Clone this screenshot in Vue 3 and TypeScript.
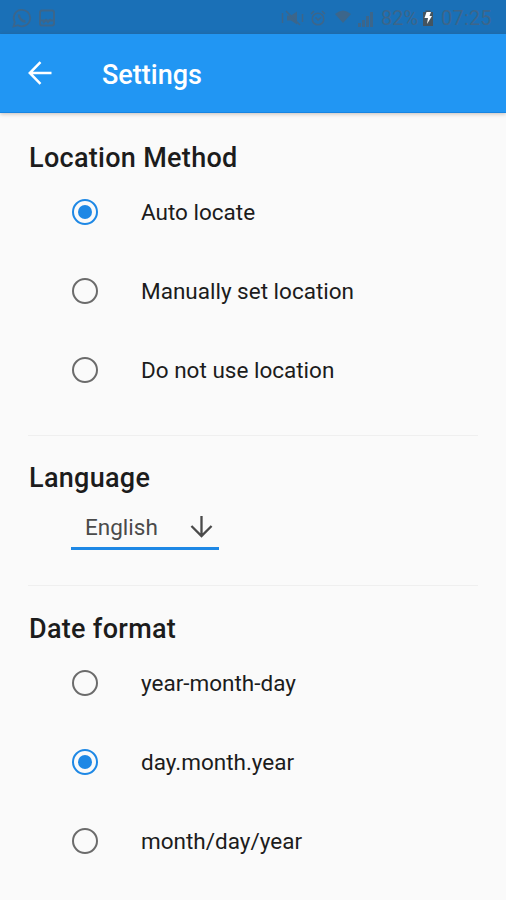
<script setup lang="ts">
import { ref } from 'vue'

interface Option {
  id: string
  label: string
}

const locationOptions: Option[] = [
  { id: 'auto', label: 'Auto locate' },
  { id: 'manual', label: 'Manually set location' },
  { id: 'none', label: 'Do not use location' },
]
const dateOptions: Option[] = [
  { id: 'ymd', label: 'year-month-day' },
  { id: 'dmy', label: 'day.month.year' },
  { id: 'mdy', label: 'month/day/year' },
]

const locationMethod = ref('auto')
const dateFormat = ref('dmy')
const language = ref('English')
</script>

<template>
  <div class="screen">
    <div class="status">
      <div class="status-left">
        <svg class="s-chat" viewBox="0 0 20 20" fill="none" stroke="currentColor" stroke-width="1.8">
          <path d="M1.5 18.5 2.8 14A8.2 8.2 0 1 1 6 17.2Z" />
          <path d="M7 6.5C6.5 10 10 13.5 13.5 13.5" stroke-width="2.4" />
        </svg>
        <svg class="s-img" viewBox="0 0 18 18" fill="none" stroke="currentColor" stroke-width="2">
          <rect x="2" y="1.5" width="14" height="15" rx="2" />
          <path d="M2 11.5h14M5 14l3-3 2 2 3-3" />
        </svg>
      </div>
      <div class="status-right">
        <svg class="s-mute" viewBox="0 0 24 16" fill="none" stroke="currentColor" stroke-width="1.5">
          <path d="M6 5.5h4l6-4v13l-6-4H6Z" fill="currentColor" stroke="none" />
          <path d="M5 1l14 14M1.5 3v10M21.5 4v8" />
        </svg>
        <svg class="s-alarm" viewBox="0 0 16 16" fill="none" stroke="currentColor" stroke-width="1.6">
          <circle cx="8" cy="9" r="5.8" />
          <path d="M1 4l3-3M15 4l-3-3M5.500 7.500 8 10l3-2.500" />
        </svg>
        <svg class="s-wifi" viewBox="0 0 16 14" fill="currentColor">
          <path d="M0 4Q8-3 16 4L8 13Z" />
        </svg>
        <svg class="s-signal" viewBox="0 0 15 16" fill="currentColor">
          <path d="M0 12h3v4H0ZM4 9h3v7H4ZM8 5h3v11H8ZM12 1h3v15h-3Z" />
        </svg>
        <span class="pct">82%</span>
        <svg class="s-bat" viewBox="0 0 12 18">
          <path d="M3.500 1.500h5V3H11v14H1V3h2.500Z" fill="#44545f" />
          <path d="M4.500 3h4.500L7.500 7H10L5 15l1-6H2.500Z" fill="#fff" />
        </svg>
        <span class="time">07:25</span>
      </div>
    </div>

    <header class="appbar">
      <svg class="back" viewBox="0 0 24 24" fill="none" stroke="currentColor" stroke-width="2.500">
        <path d="M23.500 12H2M12.500 1.200 1.800 12l10.700 10.800" />
      </svg>
      <h1>Settings</h1>
    </header>

    <main>
      <section class="location">
        <h2 class="w-location">Location Method</h2>
        <label v-for="o in locationOptions" :key="o.id" class="row" @click="locationMethod = o.id">
          <span class="radio" :class="{ on: locationMethod === o.id }"></span>
          <span class="label">{{ o.label }}</span>
        </label>
      </section>

      <section class="language">
        <h2>Language</h2>
        <div class="select">
          <span>{{ language }}</span>
          <svg viewBox="0 0 24 24" fill="none" stroke="currentColor" stroke-width="2.400">
            <path d="M12 1v20.500M1.500 11.500 12 22l10.500-10.500" />
          </svg>
        </div>
      </section>

      <section class="date">
        <h2>Date format</h2>
        <label v-for="o in dateOptions" :key="o.id" class="row" @click="dateFormat = o.id">
          <span class="radio" :class="{ on: dateFormat === o.id }"></span>
          <span class="label">{{ o.label }}</span>
        </label>
      </section>
    </main>
  </div>
</template>

<style>
body {
  margin: 0;
  background: #fafafa;
}
</style>

<style scoped>
.screen {
  width: 506px;
  height: 900px;
  overflow: hidden;
  background: #fafafa;
  font-family: Roboto, "Liberation Sans", sans-serif;
  color: #1c1c1c;
}
.screen * {
  box-sizing: border-box;
}
.status {
  height: 34px;
  padding: 2px 13px 0 12px;
  background: #1a70b7;
  color: #3c668b;
  display: flex;
  align-items: center;
  justify-content: space-between;
}
.status-left,
.status-right {
  display: flex;
  align-items: center;
}
.s-chat {
  width: 20px;
  height: 20px;
}
.s-img {
  width: 18px;
  height: 18px;
  margin-left: 6px;
}
.s-mute {
  width: 24px;
  height: 16px;
}
.s-alarm {
  width: 16px;
  height: 16px;
  margin-left: 5px;
}
.s-wifi {
  width: 16px;
  height: 14px;
  margin: -3px 0 0 9px;
}
.s-signal {
  width: 15px;
  height: 16px;
  margin: 2px 8px 0 7px;
}
.pct,
.time {
  font-size: 20px;
  line-height: 30px;
}
.pct {
  width: 39px;
}
.s-bat {
  width: 12px;
  height: 18px;
  margin: 0 7px 0 2px;
}
.time {
  width: 52px;
  letter-spacing: 0.2px;
}
.appbar {
  position: relative;
  height: 79px;
  padding: 2px 28px 0;
  background: #2196f3;
  border-bottom: 1px solid #1785e2;
  box-shadow: 0 1px 4px rgba(80, 50, 30, 0.3);
  color: #fff;
  display: flex;
  align-items: center;
}
.back {
  width: 24px;
  height: 24px;
  margin-top: -3px;
}
h1 {
  margin: 2px 0 0 50px;
  font-size: 27px;
  font-weight: 500;
  line-height: 32px;
}
main {
  padding: 0 28px;
}
h2 {
  margin: 0 0 0 1px;
  font-size: 27px;
  font-weight: 500;
  line-height: 32px;
  letter-spacing: 0.3px;
}
section + section {
  border-top: 1px solid #efefef;
}
.location {
  height: 322px;
  padding-top: 29px;
}
.language {
  height: 150px;
  padding-top: 26px;
}
.date {
  padding-top: 27px;
}
.row {
  height: 78.7px;
  padding-left: 44px;
  display: flex;
  align-items: center;
}
h2 + .row {
  margin-top: -1px;
}
.radio {
  width: 26px;
  height: 26px;
  border: 2.700px solid #6b6b6b;
  border-radius: 50%;
  display: grid;
  place-items: center;
}
.radio.on {
  border-color: #1e88e5;
}
.radio.on::after {
  content: "";
  width: 14px;
  height: 14px;
  border-radius: 50%;
  background: #1e88e5;
}
.label {
  margin-left: 43px;
  font-size: 22.500px;
  line-height: 28px;
}
.select {
  width: 148px;
  height: 44px;
  margin: 12px 0 0 43px;
  padding: 0 6px 0 14px;
  border-bottom: 3px solid #1e88e5;
  color: #4a4a4a;
  display: flex;
  align-items: center;
  justify-content: space-between;
  font-size: 22.500px;
}
.select svg {
  width: 23px;
  height: 23px;
}
</style>
